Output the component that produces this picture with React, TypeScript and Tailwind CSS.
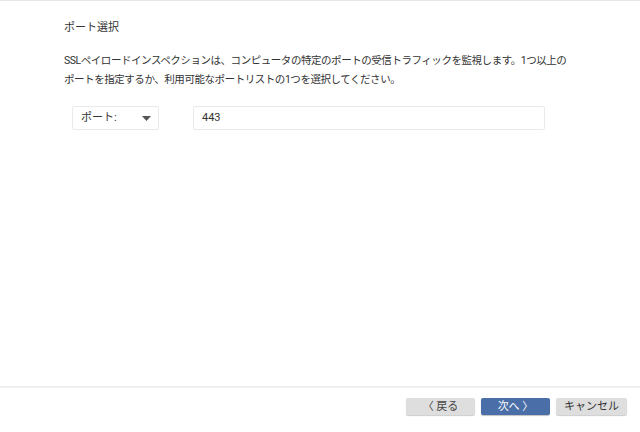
export default function App() {
  const font = { fontFamily: '"Roboto","Noto Sans CJK JP",sans-serif' };
  return (
    <div className="w-[640px] h-[432px] bg-white flex flex-col text-[#333]" style={font}>
      <div className="h-px bg-[#e6e6e6]" />
      <div className="flex-1 flex flex-col px-[64px]">
        <div className="mt-[20px] text-[11px] leading-[14px]">ポート選択</div>
        <div className="mt-[16px] text-[10.5px] leading-[19px] tracking-[-0.45px] whitespace-nowrap">
          SSLペイロードインスペクションは、コンピュータの特定のポートの受信トラフィックを監視します。1つ以上の
          <br />
          ポートを指定するか、利用可能なポートリストの1つを選択してください。
        </div>
        <div className="mt-[17px] flex items-center pl-[8px]">
          <div className="w-[87px] h-[24px] border border-[#eaeaea] rounded-[2px] flex items-center justify-between pl-[8px] pr-[7px] text-[11px]">
            <span>ポート:</span>
            <svg width="9" height="5" viewBox="0 0 9 5"><path d="M0 0h9L4.5 5z" fill="#555" /></svg>
          </div>
          <div className="ml-[34px] w-[352px] h-[24px] border border-[#eaeaea] rounded-[2px] flex items-center px-[8px] text-[11px]">
            443
          </div>
        </div>
      </div>
      <div className="h-[2px] bg-[#efefef]" />
      <div className="h-[44px] flex items-start justify-end gap-[6px] pr-[13px] pt-[10px]">
        <button className="w-[69px] h-[17px] bg-[#dedede] rounded-[2px] shadow-[0_1px_1px_rgba(0,0,0,0.2)] text-[11px] leading-[17px] text-[#444]">〈 戻る</button>
        <button className="w-[69px] h-[17px] bg-[#4a6ea8] rounded-[2px] shadow-[0_1px_1px_rgba(0,0,0,0.25)] text-[11px] leading-[17px] text-white">次へ 〉</button>
        <button className="w-[71px] h-[17px] bg-[#dedede] rounded-[2px] shadow-[0_1px_1px_rgba(0,0,0,0.2)] text-[11px] leading-[17px] text-[#333]">キャンセル</button>
      </div>
    </div>
  );
}
